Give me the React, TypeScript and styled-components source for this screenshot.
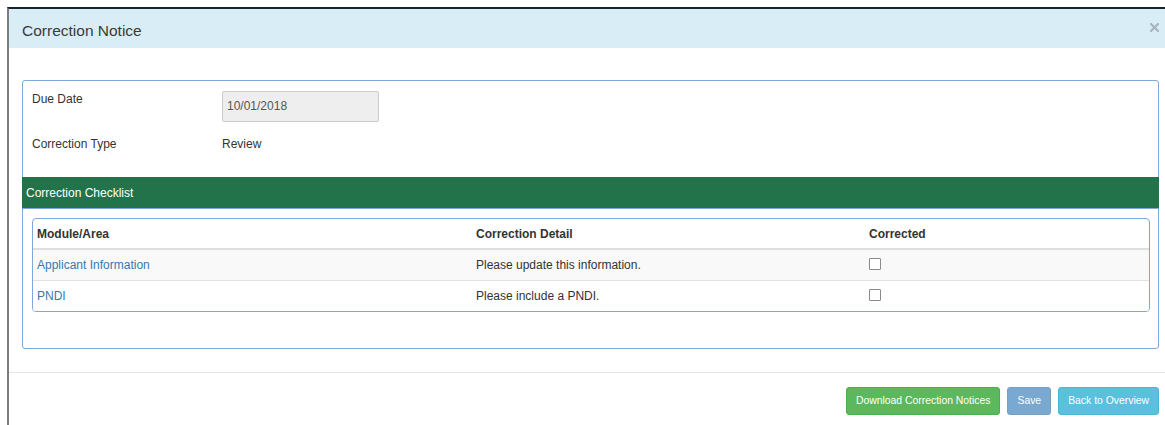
import React from "react";
import styled, { createGlobalStyle } from "styled-components";

interface ChecklistItem {
  area: string;
  detail: string;
  corrected: boolean;
}

const checklist: ChecklistItem[] = [
  { area: "Applicant Information", detail: "Please update this information.", corrected: false },
  { area: "PNDI", detail: "Please include a PNDI.", corrected: false },
];

const GlobalStyle = createGlobalStyle`
  html, body {
    margin: 0;
    padding: 0;
    overflow: hidden;
    background: #fff;
  }
  body {
    font-family: "Liberation Sans", Arial, sans-serif;
    font-size: 12px;
    color: #333;
  }
`;

export default function App() {
  return (
    <>
      <GlobalStyle />
      <Page>
        <TopStrip />
        <Modal>
          <Header>
            <Title>Correction Notice</Title>
            <CloseBtn aria-label="Close">
              <svg width="9" height="9" viewBox="0 0 9 9">
                <path d="M1 1 L8 8 M8 1 L1 8" stroke="#a9b5bc" strokeWidth="2.2" strokeLinecap="square" />
              </svg>
            </CloseBtn>
          </Header>

          <Body>
            <Panel>
              <PanelBody>
                <FormRow>
                  <Label>Due Date</Label>
                  <DateInput value="10/01/2018" readOnly />
                </FormRow>
                <FormRow $gap={14}>
                  <Label>Correction Type</Label>
                  <Value>Review</Value>
                </FormRow>
              </PanelBody>

              <SectionHeading>Correction Checklist</SectionHeading>

              <TableWrap>
                <HeadRow>
                  <HeadCell>Module/Area</HeadCell>
                  <HeadCell>Correction Detail</HeadCell>
                  <HeadCell>Corrected</HeadCell>
                </HeadRow>
                {checklist.map((item, index) => (
                  <Row key={item.area} $striped={index % 2 === 0} $first={index === 0}>
                    <Cell>
                      <AreaLink href="#">{item.area}</AreaLink>
                    </Cell>
                    <Cell>{item.detail}</Cell>
                    <Cell>
                      <Check type="checkbox" defaultChecked={item.corrected} />
                    </Cell>
                  </Row>
                ))}
              </TableWrap>
            </Panel>
          </Body>

          <Footer>
            <Button $variant="success">Download Correction Notices</Button>
            <Button $variant="primary" disabled>
              Save
            </Button>
            <Button $variant="info">Back to Overview</Button>
          </Footer>
        </Modal>
      </Page>
    </>
  );
}

const Page = styled.div`
  width: 1165px;
  height: 425px;
  overflow: hidden;
`;

const TopStrip = styled.div`
  height: 7px;
  background: #fff;
`;

const Modal = styled.div`
  margin-left: 7px;
  width: 1165px;
  box-sizing: border-box;
  border-top: 2px solid #17232f;
  border-left: 2px solid #7d7d7d;
  background: #fff;
`;

const Header = styled.div`
  display: flex;
  justify-content: space-between;
  align-items: flex-start;
  height: 39px;
  box-sizing: border-box;
  padding: 13px 13px 9px;
  background: #d9edf7;
`;

const Title = styled.div`
  font-size: 15.5px;
  line-height: 17px;
  color: #3a3a3a;
`;

const CloseBtn = styled.button`
  display: flex;
  padding: 0;
  margin-top: 0.5px;
  border: 0;
  background: transparent;
  cursor: pointer;
`;

const Body = styled.div`
  padding: 32px 13px 23px;
`;

const Panel = styled.div`
  border: 1px solid #7ea8d5;
  border-radius: 3px;
  background: #fff;
`;

const PanelBody = styled.div`
  padding: 10px 9px 24px;
`;

const FormRow = styled.div<{ $gap?: number }>`
  display: grid;
  grid-template-columns: 190px auto;
  align-items: start;
  margin-top: ${(p) => p.$gap ?? 0}px;
`;

const Label = styled.div`
  line-height: 17px;
  color: #333;
`;

const Value = styled.div`
  line-height: 17px;
  color: #333;
`;

const DateInput = styled.input`
  width: 157px;
  height: 31px;
  box-sizing: border-box;
  padding: 0 4px 2px;
  border: 1px solid #ccc;
  border-radius: 2px;
  background: #eee;
  font-family: "Liberation Sans", Arial, sans-serif;
  font-size: 12px;
  color: #555;
  outline: none;
`;

const SectionHeading = styled.div`
  display: flex;
  align-items: center;
  height: 31px;
  margin: 0 -1px;
  padding-left: 4px;
  border-bottom: 1px solid #7ea8d5;
  background: #22734a;
  color: #fff;
  font-size: 12px;
`;

const TableWrap = styled.div`
  margin: 9px 8px 36px 9px;
  border: 1px solid #7ea8d5;
  border-radius: 4px;
  overflow: hidden;
`;

const columns = "439px 393px 1fr";

const HeadRow = styled.div`
  display: grid;
  grid-template-columns: ${columns};
  height: 31px;
  box-sizing: border-box;
  border-bottom: 2px solid #dedede;
`;

const HeadCell = styled.div`
  display: flex;
  align-items: center;
  padding: 0 4px;
  font-weight: bold;
  color: #333;
`;

const Row = styled.div<{ $striped: boolean; $first: boolean }>`
  display: grid;
  grid-template-columns: ${columns};
  height: ${(p) => (p.$first ? 30 : 31)}px;
  box-sizing: border-box;
  border-top: ${(p) => (p.$first ? "none" : "1px solid #e2e2e2")};
  background: ${(p) => (p.$striped ? "#f9f9f9" : "#fff")};
`;

const Cell = styled.div`
  display: flex;
  align-items: center;
  padding: 0 4px;
  color: #333;
`;

const AreaLink = styled.a`
  color: #337ab7;
  text-decoration: none;
`;

const Check = styled.input`
  appearance: none;
  width: 12px;
  height: 12px;
  margin: -3px 0 0;
  border: 1px solid #8a8a8a;
  border-radius: 1px;
  background: #fff;
`;

const Footer = styled.div`
  display: flex;
  justify-content: flex-end;
  gap: 7px;
  padding: 14px 13px;
  border-top: 1px solid #e5e5e5;
`;

const buttonColors = {
  success: { bg: "#5cb85c", border: "#4cae4c" },
  primary: { bg: "#337ab7", border: "#2e6da4" },
  info: { bg: "#5bc0de", border: "#46b8da" },
};

const Button = styled.button<{ $variant: keyof typeof buttonColors }>`
  height: 28px;
  padding: 0 9px;
  border: 1px solid ${(p) => buttonColors[p.$variant].border};
  border-radius: 3px;
  background: ${(p) => buttonColors[p.$variant].bg};
  color: #fff;
  font-family: "Liberation Sans", Arial, sans-serif;
  font-size: 10.4px;
  line-height: 26px;
  white-space: nowrap;
  cursor: pointer;

  &:disabled {
    opacity: 0.65;
    cursor: not-allowed;
  }
`;
